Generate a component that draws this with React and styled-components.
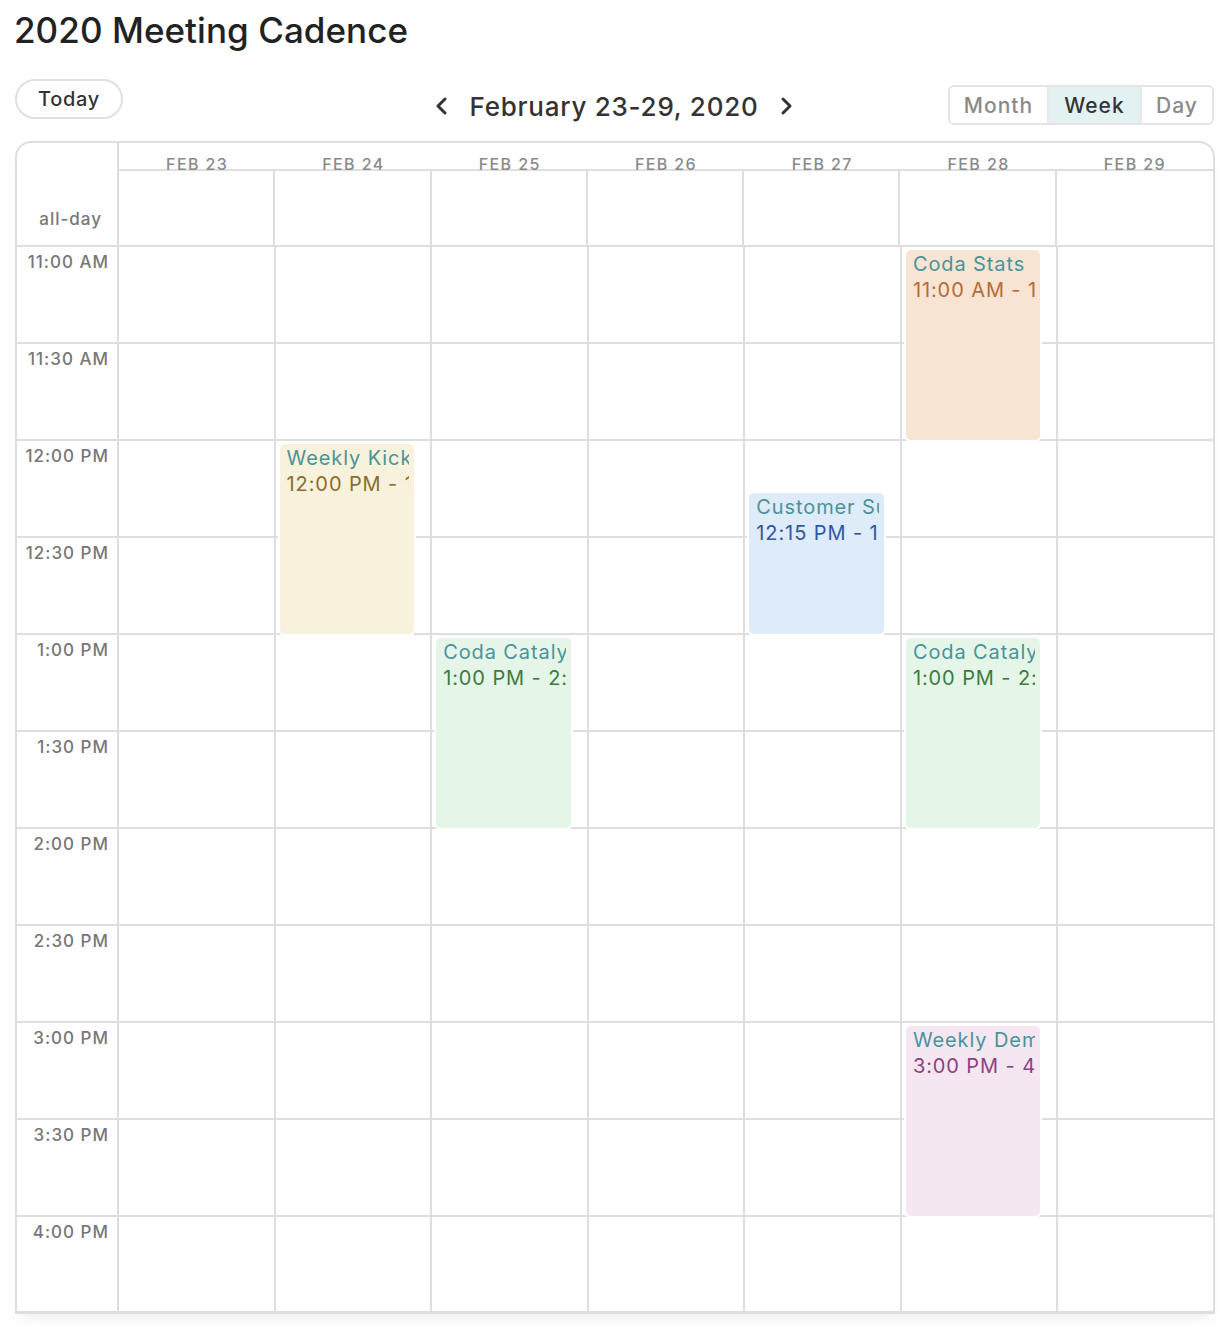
import React from "react";
import styled, { createGlobalStyle } from "styled-components";

const SLOT = 97;
const LINE = "#dedede";

const Global = createGlobalStyle`
  * { box-sizing: border-box; }
  body {
    margin: 0;
    background: #fff;
    font-family: Inter, "Noto Sans", "Liberation Sans", sans-serif;
    color: #222;
  }
`;

const Page = styled.div`
  width: 1230px;
  padding: 10px 16px 14px 14px;
`;

const Title = styled.h1`
  margin: 0;
  font-size: 35px;
  line-height: 40px;
  font-weight: 500;
  color: #222;
  letter-spacing: 0.05px;
`;

const Toolbar = styled.div`
  display: grid;
  grid-template-columns: 1fr auto 1fr;
  align-items: start;
  margin-top: 29px;
  height: 62px;
`;

const TodayButton = styled.button`
  justify-self: start;
  margin-left: 1px;
  width: 108px;
  height: 40px;
  border: 2px solid #e0e0e0;
  border-radius: 20px;
  background: #fff;
  font-family: inherit;
  font-size: 20px;
  font-weight: 500;
  color: #333;
  padding: 0;
  letter-spacing: 0.7px;
  cursor: pointer;
`;

const Nav = styled.div`
  display: flex;
  align-items: center;
  gap: 20px;
  height: 40px;
  margin-top: 7px;
`;

const NavTitle = styled.div`
  font-size: 26px;
  font-weight: 500;
  color: #333;
  letter-spacing: 0.75px;
`;

const Chevron = styled.button`
  border: 0;
  background: none;
  padding: 0;
  width: 16px;
  height: 22px;
  display: flex;
  align-items: center;
  justify-content: center;
  cursor: pointer;
`;

const Segmented = styled.div`
  justify-self: end;
  display: flex;
  margin-top: 6px;
  height: 40px;
  border: 2px solid #e4e4e4;
  border-radius: 6px;
  overflow: hidden;
`;

const Segment = styled.button`
  border: 0;
  border-left: ${(p) => (p.$first ? "0" : "2px solid #e8e8e8")};
  background: ${(p) => (p.$active ? "#e4f1f2" : "#fff")};
  color: ${(p) => (p.$active ? "#333" : "#8a8a8a")};
  font-family: inherit;
  font-size: 21px;
  font-weight: 500;
  padding: 0;
  width: ${(p) => p.$w}px;
  letter-spacing: 1px;
  cursor: pointer;
`;

const Calendar = styled.div`
  width: 1200px;
  margin-left: 1px;
  border: 2px solid ${LINE};
  border-bottom: 0;
  border-radius: 16px 16px 0 0;
  box-shadow: 0 10px 14px -6px rgba(0, 0, 0, 0.07);
  background: #fff;
`;

const Head = styled.div`
  display: grid;
  grid-template-columns: 102px repeat(7, 1fr);
  grid-template-rows: 28px 74px;
  border-bottom: 2px solid ${LINE};
`;

const Corner = styled.div`
  grid-row: 1 / span 2;
  border-right: 2px solid ${LINE};
  display: flex;
  align-items: flex-end;
  justify-content: flex-end;
  padding: 0 15px 16px 0;
  font-size: 17px;
  font-weight: 500;
  color: #777;
  letter-spacing: 1px;
`;

const DayLabel = styled.div`
  grid-row: 1;
  border-bottom: 2px solid ${LINE};
  text-align: center;
  padding-top: 12px;
  font-size: 16px;
  line-height: 18px;
  font-weight: 500;
  color: #8a8a8a;
  letter-spacing: 1.4px;
  white-space: nowrap;
`;

const AllDayCell = styled.div`
  grid-row: 2;
  border-right: ${(p) => (p.$last ? "0" : `2px solid ${LINE}`)};
`;

const Body = styled.div`
  display: flex;
`;

const Axis = styled.div`
  width: 102px;
  flex: none;
  border-right: 2px solid ${LINE};
`;

const TimeSlot = styled.div`
  height: ${SLOT}px;
  border-bottom: ${(p) => (p.$last ? "3px" : "2px")} solid ${LINE};
  text-align: right;
  padding: 5px 8px 0 0;
  font-size: 17px;
  line-height: 20px;
  font-weight: 500;
  color: #777;
  letter-spacing: 1px;
`;

const DayColumn = styled.div`
  flex: 1;
  min-width: 0;
  position: relative;
  border-right: ${(p) => (p.$last ? "0" : `2px solid ${LINE}`)};
`;

const Slot = styled.div`
  height: ${SLOT}px;
  border-bottom: ${(p) => (p.$last ? "3px" : "2px")} solid ${LINE};
`;

const Event = styled.div`
  position: absolute;
  left: 4px;
  right: 16px;
  background: ${(p) => p.$bg};
  border-radius: 5px;
  box-shadow: 0 0 0 2px #fff;
  padding: 1px 5px 0 7px;
  overflow: hidden;
`;

const EventLine = styled.div`
  font-size: 20px;
  line-height: 26px;
  white-space: nowrap;
  overflow: hidden;
  color: ${(p) => p.$color};
  letter-spacing: 0.9px;
`;

const days = ["FEB 23", "FEB 24", "FEB 25", "FEB 26", "FEB 27", "FEB 28", "FEB 29"];
const times = [
  "11:00 AM", "11:30 AM", "12:00 PM", "12:30 PM", "1:00 PM", "1:30 PM",
  "2:00 PM", "2:30 PM", "3:00 PM", "3:30 PM", "4:00 PM",
];

const TEAL = "#4a939a";
const events = [
  { day: 1, start: 60, end: 120, title: "Weekly Kickoff", time: "12:00 PM - 1:00 PM", bg: "#f8f2dc", fg: "#8a6d2e" },
  { day: 2, start: 120, end: 180, title: "Coda Catalyst", time: "1:00 PM - 2:00 PM", bg: "#e5f6e8", fg: "#3c7c3e" },
  { day: 4, start: 75, end: 120, title: "Customer Success", time: "12:15 PM - 1:00 PM", bg: "#deebf8", fg: "#2f58a2" },
  { day: 5, start: 0, end: 60, title: "Coda Stats", time: "11:00 AM - 12:00 PM", bg: "#f8e4d2", fg: "#b66a3c" },
  { day: 5, start: 120, end: 180, title: "Coda Catalyst", time: "1:00 PM - 2:00 PM", bg: "#e5f6e8", fg: "#3c7c3e" },
  { day: 5, start: 240, end: 300, title: "Weekly Demo", time: "3:00 PM - 4:00 PM", bg: "#f4e7f1", fg: "#8f3f82" },
];

const ChevronIcon = ({ dir }) => (
  <svg width="14" height="20" viewBox="0 0 14 20" fill="none">
    <polyline
      points={dir === "left" ? "10,3 3,10 10,17" : "4,3 11,10 4,17"}
      stroke="#333"
      strokeWidth="3"
      strokeLinecap="round"
      strokeLinejoin="round"
    />
  </svg>
);

export default function App() {
  return (
    <Page>
      <Global />
      <Title>2020 Meeting Cadence</Title>
      <Toolbar>
        <TodayButton>Today</TodayButton>
        <Nav>
          <Chevron aria-label="Previous"><ChevronIcon dir="left" /></Chevron>
          <NavTitle>February 23-29, 2020</NavTitle>
          <Chevron aria-label="Next"><ChevronIcon dir="right" /></Chevron>
        </Nav>
        <Segmented>
          <Segment $first $w={97}>Month</Segment>
          <Segment $active $w={93}>Week</Segment>
          <Segment $w={72}>Day</Segment>
        </Segmented>
      </Toolbar>
      <Calendar>
        <Head>
          <Corner>all-day</Corner>
          {days.map((d) => (
            <DayLabel key={d}>{d}</DayLabel>
          ))}
          {days.map((d, i) => (
            <AllDayCell key={d} $last={i === days.length - 1} />
          ))}
        </Head>
        <Body>
          <Axis>
            {times.map((t, i) => (
              <TimeSlot key={t} $last={i === times.length - 1}>{t}</TimeSlot>
            ))}
          </Axis>
          {days.map((d, di) => (
            <DayColumn key={d} $last={di === days.length - 1}>
              {times.map((t, i) => (
                <Slot key={t} $last={i === times.length - 1} />
              ))}
              {events
                .filter((e) => e.day === di)
                .map((e) => {
                  const top = (e.start * SLOT) / 30 + 3;
                  const bottom = (e.end * SLOT) / 30 - 1;
                  return (
                    <Event
                      key={e.title + e.start}
                      $bg={e.bg}
                      style={{ top: `${top}px`, height: `${bottom - top}px` }}
                    >
                      <EventLine $color={TEAL}>{e.title}</EventLine>
                      <EventLine $color={e.fg}>{e.time}</EventLine>
                    </Event>
                  );
                })}
            </DayColumn>
          ))}
        </Body>
      </Calendar>
    </Page>
  );
}
